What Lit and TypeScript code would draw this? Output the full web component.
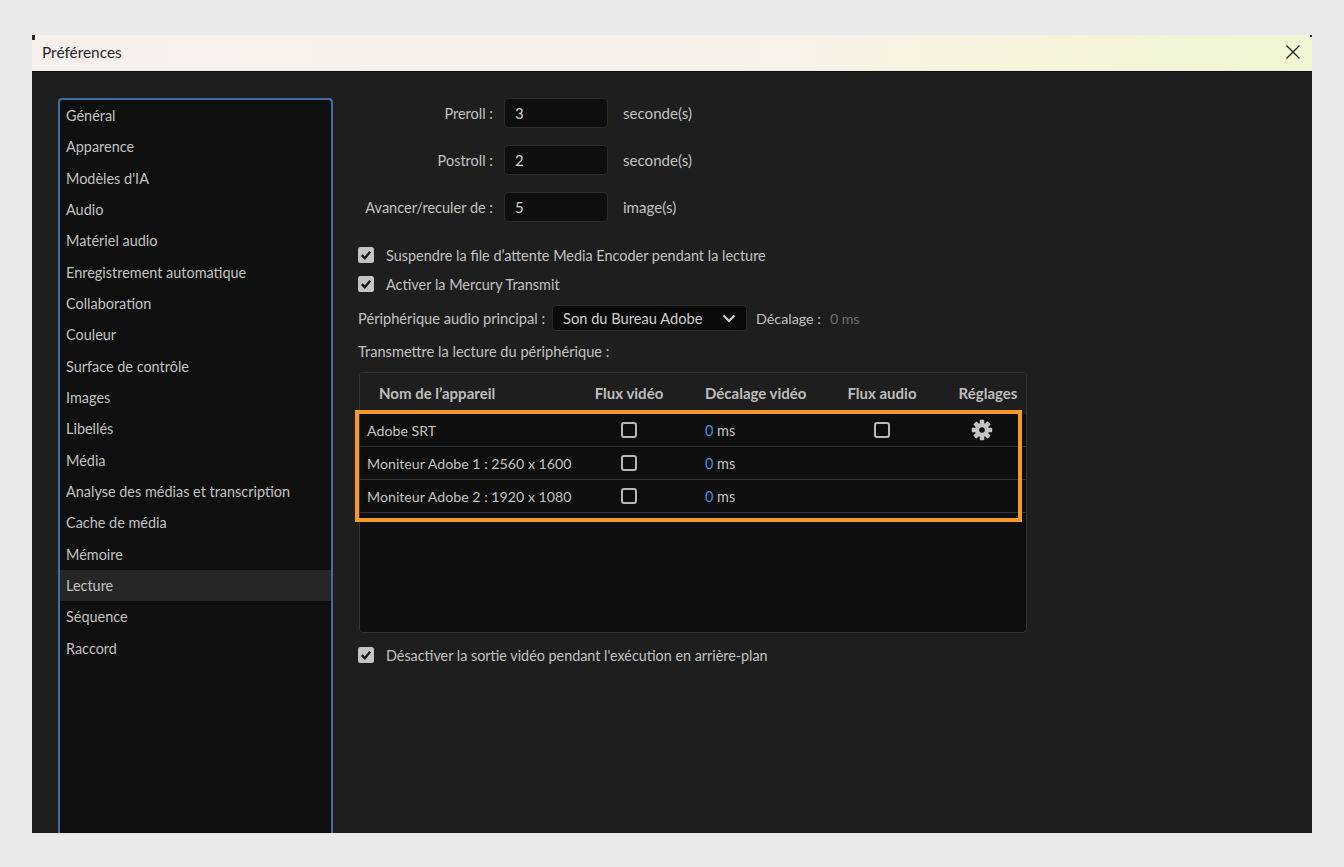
import { LitElement, html, css, svg } from "lit";
import { customElement } from "lit/decorators.js";

const NAV = ["Général","Apparence","Modèles d'IA","Audio","Matériel audio","Enregistrement automatique","Collaboration","Couleur","Surface de contrôle","Images","Libellés","Média","Analyse des médias et transcription","Cache de média","Mémoire","Lecture","Séquence","Raccord"];
const FIELDS = [["Preroll :","3","seconde(s)"],["Postroll :","2","seconde(s)"],["Avancer/reculer de :","5","image(s)"]];
const ROWS = [
  { name: "Adobe SRT", audio: true },
  { name: "Moniteur Adobe 1 : 2560 x 1600", audio: false },
  { name: "Moniteur Adobe 2 : 1920 x 1080", audio: false },
];
const gearTeeth = [0,45,90,135,180,225,270,315];

@customElement("app-root")
export class AppRoot extends LitElement {
  static styles = css`
    :host { display: block; height: 867px; box-sizing: border-box; padding: 35px 32px 34px; background: #e9eaeb; font-family: Lato, "Noto Sans", sans-serif; font-size: 14.45px; color: #c2c2c2; overflow: hidden; }
    .window { position: relative; height: 798px; display: flex; flex-direction: column; background: #1e1e1e; overflow: hidden; }
    .title { flex: none; height: 37px; box-sizing: border-box; border-bottom: 1px solid #0c0c0c; padding: 0 12px 2px 10px; display: flex; align-items: center; justify-content: space-between; font-size: 15.4px; color: #262626; background: linear-gradient(90deg, #f7f0ec 0%, #f8f1ea 55%, #f8f3de 75%, #f0f5d2 100%); }
    .close { display: block; width: 14px; height: 14px; }
    .corner { position: absolute; top: 0; width: 3px; height: 5px; background: #2a2a2a; }
    .corner.l { left: 0; }
    .corner.r { right: 0; width: 2px; height: 2px; }
    .body { flex: 1; min-height: 0; display: flex; padding: 26px 0 0 26px; }
    .nav { flex: none; box-sizing: border-box; width: 275px; border: 2px solid #3d6ea5; border-bottom: 0; border-radius: 4px 4px 0 0; background: #0f0f0f; }
    .nav div { height: 31.33px; line-height: 31.33px; padding-left: 6px; white-space: nowrap; }
    .nav .sel { background: #262626; }
    .main { flex: none; margin-left: 25px; width: 680px; }
    .field { display: flex; align-items: center; height: 30px; margin-bottom: 17px; }
    .field .lab { width: 135px; text-align: right; margin-right: 11px; white-space: nowrap; font-size: 14.5px; }
    .field .inp { width: 104px; height: 30px; box-sizing: border-box; border: 1px solid #2c2c2c; border-radius: 4px; background: #0e0e0e; padding: 0 10px; line-height: 29px; color: #cfcfcf; font-size: 15px; }
    .field .unit { margin-left: 15px; font-size: 15.1px; }
    .chk { display: flex; align-items: center; gap: 12px; height: 16px; margin-bottom: 13px; white-space: nowrap; }
    .first-chk { margin-top: 25px; }
    .box { flex: none; display: block; width: 16px; height: 16px; }
    .audio { display: flex; align-items: center; height: 26px; white-space: nowrap; font-size: 14.65px; }
    .select { width: 195px; height: 26px; box-sizing: border-box; margin: 0 9px 0 7px; border: 1px solid #2c2c2c; border-radius: 4px; background: #0a0a0a; display: flex; align-items: center; justify-content: space-between; padding: 0 10px; color: #cfcfcf; }
    .chev { width: 14px; height: 9px; display: block; }
    .offset { font-size: 14.3px; }
    .muted { color: #6e6e6e; margin-left: 9px; font-size: 14.3px; }
    .sub { margin-top: 12px; height: 18px; line-height: 18px; font-size: 14.6px; }
    .table { position: relative; box-sizing: border-box; width: 668px; height: 261px; margin: 11px 0 0 1px; border: 1px solid #333; border-radius: 4px; background: #0e0e0e; }
    .head, .row { display: grid; grid-template-columns: 226px 86px 162px 96px 1fr; align-items: center; }
    .head { height: 41px; box-sizing: border-box; padding-bottom: 2px; background: #1e1e1e; border-radius: 4px 4px 0 0; font-size: 15px; font-weight: 700; color: #bdbdbd; }
    .head .first { padding-left: 19px; }
    .row { height: 33px; box-sizing: border-box; border-bottom: 1px solid #343434; }
    .row .first { padding-left: 7px; white-space: nowrap; font-size: 14.2px; }
    .c { text-align: center; display: flex; justify-content: center; }
    .off { padding-left: 33px; white-space: nowrap; }
    .blue { color: #4a8fdc; }
    .set { padding-left: 20px; }
    .gear { display: block; width: 22px; height: 22px; margin-left: 7px; }
    .gear-cell { display: flex; justify-content: center; }
    .hl { position: absolute; left: -5px; top: 37px; width: 667px; height: 112px; box-sizing: border-box; border: 4px solid #f39a2b; pointer-events: none; }
    .last { margin-top: 14px; font-size: 14.35px; }
  `;

  private box(checked: boolean) {
    return html`<svg class="box" viewBox="0 0 16 16" aria-hidden="true">
      ${checked
        ? svg`<rect x="0" y="0" width="16" height="16" rx="2.5" fill="#c4c4c4"/><path d="M3.8 8.2 6.8 11.2 12.2 4.8" fill="none" stroke="#1a1a1a" stroke-width="2.4"/>`
        : svg`<rect x="1" y="1" width="14" height="14" rx="2" fill="none" stroke="#b8b8b8" stroke-width="2"/>`}
    </svg>`;
  }

  private gear() {
    return html`<svg class="gear" viewBox="0 0 22 22" aria-hidden="true">
      ${gearTeeth.map((a) => svg`<rect x="8.8" y="0.8" width="4.4" height="5" rx="0.6" fill="#c4c4c4" transform="rotate(${a} 11 11)"/>`)}
      <path fill-rule="evenodd" fill="#c4c4c4" d="M11 4a7 7 0 1 0 0 14 7 7 0 0 0 0-14Zm0 4.2a2.8 2.8 0 1 1 0 5.6 2.8 2.8 0 0 1 0-5.6Z"/>
    </svg>`;
  }

  render() {
    return html`
      <div class="window">
        <span class="corner l"></span><span class="corner r"></span>
        <div class="title">
          <span>Préférences</span>
          <svg class="close" viewBox="0 0 14 14" aria-hidden="true"><path d="M.5.5 13.5 13.5M13.5.5.5 13.5" stroke="#222" stroke-width="1.3" fill="none"/></svg>
        </div>
        <div class="body">
          <div class="nav">
            ${NAV.map((n) => html`<div class=${n === "Lecture" ? "sel" : ""}>${n}</div>`)}
          </div>
          <div class="main">
            ${FIELDS.map(([l, v, u]) => html`<div class="field"><span class="lab">${l}</span><span class="inp">${v}</span><span class="unit">${u}</span></div>`)}
            <div class="chk first-chk">${this.box(true)}<span>Suspendre la file d’attente Media Encoder pendant la lecture</span></div>
            <div class="chk">${this.box(true)}<span>Activer la Mercury Transmit</span></div>
            <div class="audio">
              <span>Périphérique audio principal :</span>
              <div class="select"><span>Son du Bureau Adobe</span>
                <svg class="chev" viewBox="0 0 14 9" aria-hidden="true"><path d="M1.5 1.5 7 7l5.5-5.5" fill="none" stroke="#d0d0d0" stroke-width="2.2"/></svg>
              </div>
              <span class="offset">Décalage :</span><span class="muted">0 ms</span>
            </div>
            <div class="sub">Transmettre la lecture du périphérique :</div>
            <div class="table">
              <div class="head">
                <span class="first">Nom de l’appareil</span><span class="c">Flux vidéo</span><span class="off">Décalage vidéo</span><span class="c">Flux audio</span><span class="set c">Réglages</span>
              </div>
              ${ROWS.map((r) => html`<div class="row">
                <span class="first">${r.name}</span>
                <span class="c">${this.box(false)}</span>
                <span class="off"><span class="blue">0</span> ms</span>
                <span class="c">${r.audio ? this.box(false) : ""}</span>
                <span class="gear-cell">${r.audio ? this.gear() : ""}</span>
              </div>`)}
              <div class="hl"></div>
            </div>
            <div class="chk last">${this.box(true)}<span>Désactiver la sortie vidéo pendant l'exécution en arrière-plan</span></div>
          </div>
        </div>
      </div>
    `;
  }
}
